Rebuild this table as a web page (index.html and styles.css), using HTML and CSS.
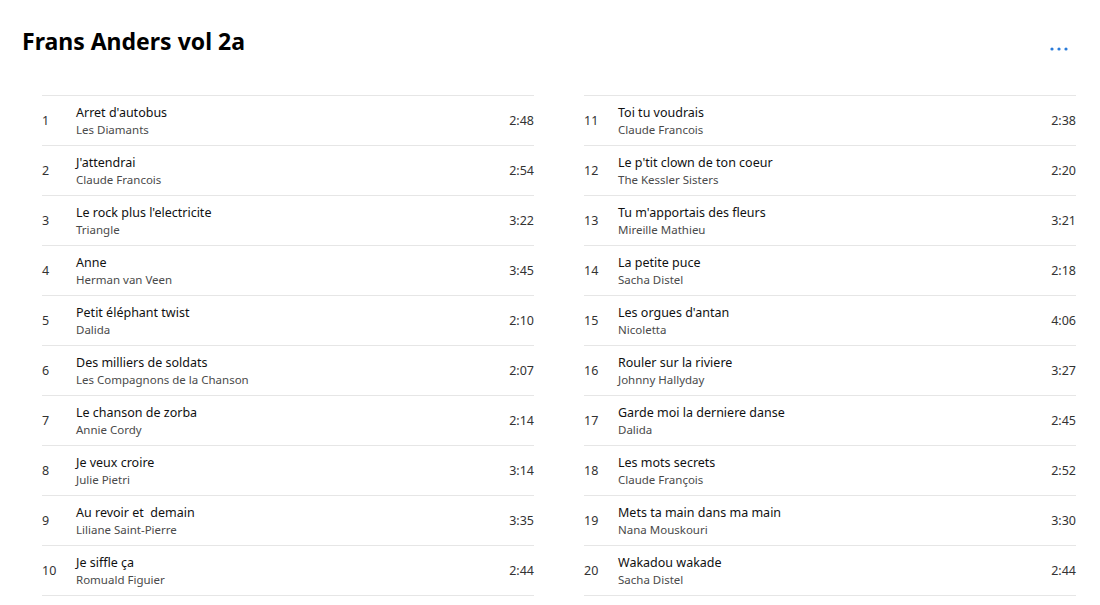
FILE: index.html
```html
<!DOCTYPE html>
<html>
<head>
<meta charset="utf-8">
<link rel="stylesheet" href="styles.css">
</head>
<body>
<div class="page">
  <header class="header">
    <h1 class="title">Frans Anders vol 2a</h1>
    <button class="more" aria-label="More">
      <svg width="18" height="4" viewBox="0 0 18 4"><circle cx="2" cy="2" r="1.6"/><circle cx="9" cy="2" r="1.6"/><circle cx="16" cy="2" r="1.6"/></svg>
    </button>
  </header>
  <div class="columns">
    <ol class="list">
      <li class="row"><span class="num">1</span><div class="info"><div class="name">Arret d'autobus</div><div class="artist">Les Diamants</div></div><span class="dur">2:48</span></li>
      <li class="row"><span class="num">2</span><div class="info"><div class="name">J'attendrai</div><div class="artist">Claude Francois</div></div><span class="dur">2:54</span></li>
      <li class="row"><span class="num">3</span><div class="info"><div class="name">Le rock plus l'electricite</div><div class="artist">Triangle</div></div><span class="dur">3:22</span></li>
      <li class="row"><span class="num">4</span><div class="info"><div class="name">Anne</div><div class="artist">Herman van Veen</div></div><span class="dur">3:45</span></li>
      <li class="row"><span class="num">5</span><div class="info"><div class="name">Petit éléphant twist</div><div class="artist">Dalida</div></div><span class="dur">2:10</span></li>
      <li class="row"><span class="num">6</span><div class="info"><div class="name">Des milliers de soldats</div><div class="artist">Les Compagnons de la Chanson</div></div><span class="dur">2:07</span></li>
      <li class="row"><span class="num">7</span><div class="info"><div class="name">Le chanson de zorba</div><div class="artist">Annie Cordy</div></div><span class="dur">2:14</span></li>
      <li class="row"><span class="num">8</span><div class="info"><div class="name">Je veux croire</div><div class="artist">Julie Pietri</div></div><span class="dur">3:14</span></li>
      <li class="row"><span class="num">9</span><div class="info"><div class="name">Au revoir et&nbsp; demain</div><div class="artist">Liliane Saint-Pierre</div></div><span class="dur">3:35</span></li>
      <li class="row"><span class="num">10</span><div class="info"><div class="name">Je siffle ça</div><div class="artist">Romuald Figuier</div></div><span class="dur">2:44</span></li>
    </ol>
    <ol class="list">
      <li class="row"><span class="num">11</span><div class="info"><div class="name">Toi tu voudrais</div><div class="artist">Claude Francois</div></div><span class="dur">2:38</span></li>
      <li class="row"><span class="num">12</span><div class="info"><div class="name">Le p'tit clown de ton coeur</div><div class="artist">The Kessler Sisters</div></div><span class="dur">2:20</span></li>
      <li class="row"><span class="num">13</span><div class="info"><div class="name">Tu m'apportais des fleurs</div><div class="artist">Mireille Mathieu</div></div><span class="dur">3:21</span></li>
      <li class="row"><span class="num">14</span><div class="info"><div class="name">La petite puce</div><div class="artist">Sacha Distel</div></div><span class="dur">2:18</span></li>
      <li class="row"><span class="num">15</span><div class="info"><div class="name">Les orgues d'antan</div><div class="artist">Nicoletta</div></div><span class="dur">4:06</span></li>
      <li class="row"><span class="num">16</span><div class="info"><div class="name">Rouler sur la riviere</div><div class="artist">Johnny Hallyday</div></div><span class="dur">3:27</span></li>
      <li class="row"><span class="num">17</span><div class="info"><div class="name">Garde moi la derniere danse</div><div class="artist">Dalida</div></div><span class="dur">2:45</span></li>
      <li class="row"><span class="num">18</span><div class="info"><div class="name">Les mots secrets</div><div class="artist">Claude François</div></div><span class="dur">2:52</span></li>
      <li class="row"><span class="num">19</span><div class="info"><div class="name">Mets ta main dans ma main</div><div class="artist">Nana Mouskouri</div></div><span class="dur">3:30</span></li>
      <li class="row"><span class="num">20</span><div class="info"><div class="name">Wakadou wakade</div><div class="artist">Sacha Distel</div></div><span class="dur">2:44</span></li>
    </ol>
  </div>
</div>
</body>
</html>
```
FILE: styles.css
```css
html, body {
  margin: 0;
  padding: 0;
  background: #ffffff;
}
body {
  font-family: "Noto Sans", "Open Sans", sans-serif;
  color: #000;
}
.page {
  width: 1100px;
  height: 605px;
  overflow: hidden;
}
.header {
  display: flex;
  justify-content: space-between;
  align-items: flex-start;
  padding: 26px 24px 0 22px;
  height: 69px;
  box-sizing: border-box;
}
.title {
  margin: 0;
  font-size: 23px;
  font-weight: 700;
  line-height: 30px;
  letter-spacing: 0;
}
.more {
  border: 0;
  background: none;
  padding: 0;
  margin-top: 21px;
  margin-right: 8px;
  line-height: 0;
  fill: #2a7bd9;
}
.columns {
  display: grid;
  grid-template-columns: 492px 492px;
  column-gap: 50px;
  padding: 26px 0 0 42px;
}
.list {
  list-style: none;
  margin: 0;
  padding: 0;
  border-top: 1px solid #e6e6e6;
}
.row {
  display: flex;
  align-items: center;
  height: 50px;
  box-sizing: border-box;
  border-bottom: 1px solid #e6e6e6;
}
.num {
  width: 34px;
  flex: none;
  font-size: 12.5px;
  color: #333;
}
.info {
  flex: 1;
  min-width: 0;
  display: flex;
  flex-direction: column;
}
.name {
  font-size: 12.5px;
  line-height: 17px;
  color: #111;
}
.artist {
  font-size: 11.5px;
  line-height: 17px;
  color: #4a4a4a;
}
.dur {
  font-size: 12.5px;
  color: #333;
}
```
